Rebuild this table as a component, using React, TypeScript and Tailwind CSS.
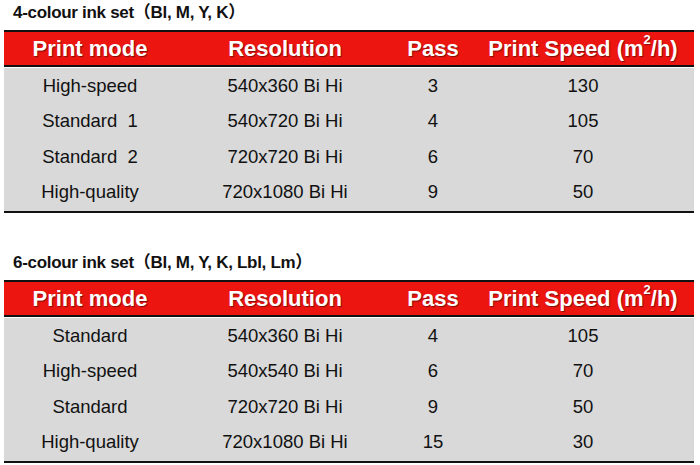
const headers = ['Print mode', 'Resolution', 'Pass'];

type Row = [string, string, string, string];

const fourColour: Row[] = [
  ['High-speed', '540x360 Bi Hi', '3', '130'],
  ['Standard  1', '540x720 Bi Hi', '4', '105'],
  ['Standard  2', '720x720 Bi Hi', '6', '70'],
  ['High-quality', '720x1080 Bi Hi', '9', '50'],
];

const sixColour: Row[] = [
  ['Standard', '540x360 Bi Hi', '4', '105'],
  ['High-speed', '540x540 Bi Hi', '6', '70'],
  ['Standard', '720x720 Bi Hi', '9', '50'],
  ['High-quality', '720x1080 Bi Hi', '15', '30'],
];

const cols = 'grid grid-cols-[172px_218px_78px_1fr]';

function SpeedTable({ title, rows }: { title: string; rows: Row[] }) {
  return (
    <section>
      <h2 className="h-[30px] pl-[9px] pt-[2px] text-[17px] font-bold leading-[22px] text-[#111] tracking-[-0.3px]">
        {title}
      </h2>
      <div className="border-y-2 border-[#111]">
        <div className={`${cols} h-[33px] items-center bg-[#ec1510] text-[22px] font-bold text-white [text-shadow:1px_1px_1px_rgba(0,0,0,0.45)]`}>
          {headers.map((h) => (
            <div key={h} className="text-center">
              {h}
            </div>
          ))}
          <div className="text-center">
            Print Speed (m<sup className="text-[13px] align-[6px]">2</sup>/h)
          </div>
        </div>
        <div className="border-t-2 border-[#111] bg-white pt-px">
          <div className="bg-[#d9d9d9] pb-px">
            {rows.map((r, i) => (
              <div key={i} className={`${cols} h-[35.5px] items-center text-[18.5px] text-[#111]`}>
                {r.map((c, j) => (
                  <div key={j} className="whitespace-pre text-center">
                    {c}
                  </div>
                ))}
              </div>
            ))}
          </div>
        </div>
      </div>
    </section>
  );
}

export default function App() {
  return (
    <div
      className="w-[700px] h-[465px] bg-white pl-[4px] pr-[6px]"
      style={{ fontFamily: '"Liberation Sans", "Noto Sans CJK SC", Arial, sans-serif' }}
    >
      <SpeedTable title="4-colour ink set（Bl, M, Y, K）" rows={fourColour} />
      <div className="h-[37px]" />
      <SpeedTable title="6-colour ink set（Bl, M, Y, K, Lbl, Lm）" rows={sixColour} />
    </div>
  );
}
